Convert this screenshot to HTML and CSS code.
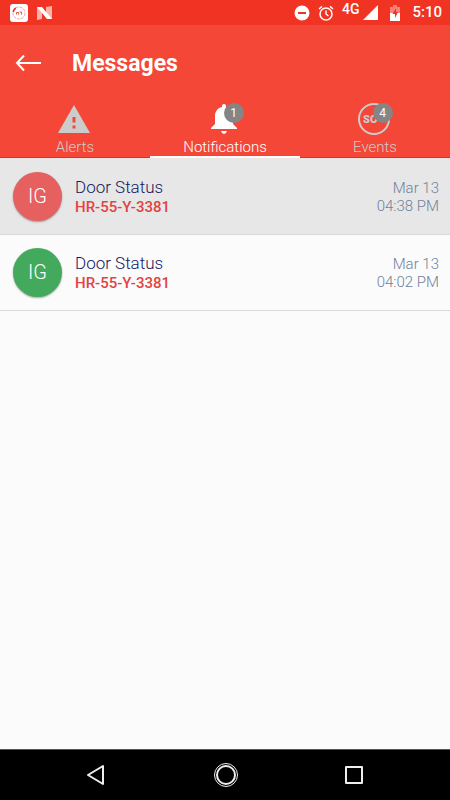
FILE: index.html
```html
<!DOCTYPE html>
<html lang="en">
<head>
<meta charset="utf-8">
<meta name="viewport" content="width=device-width, initial-scale=1">
<title>Messages</title>
<link rel="stylesheet" href="styles.css">
</head>
<body>
<div class="status-bar">
  <div class="status-left">
    <svg width="18" height="18" viewBox="0 0 18 18" aria-hidden="true"><rect width="18" height="18" rx="3" fill="#fff"/><circle cx="9" cy="9" r="6" fill="none" stroke="#f5a196" stroke-width="1" stroke-dasharray="3 1"/><path d="M3.200 8a6 6 0 0 1 2.600-4" fill="none" stroke="#e33022" stroke-width="1.500"/><path d="M6.500 10.500v-2h2v2M9.500 8h2v2.500" fill="none" stroke="#e8574a"/></svg>
    <svg width="16" height="14" viewBox="0 0 16 14" aria-hidden="true"><path d="M1 1l5 2v10l-5 1zM10 1l6-1v13l-6-2z" fill="#fab3aa"/><path d="M1 1h5l10 12h-5z" fill="#fff"/></svg>
  </div>
  <div class="status-right">
    <svg width="16" height="16" viewBox="0 0 16 16" aria-hidden="true"><circle cx="8" cy="8" r="7.500" fill="#fff"/><path d="M4 8h8" stroke="#ee3322" stroke-width="2"/></svg>
    <svg width="16" height="16" viewBox="0 0 16 16" fill="none" stroke="#fff" aria-hidden="true"><circle cx="8" cy="9" r="6" stroke-width="1.500"/><path d="M8 5.500V9l2.500 2M1 4l3-2.600M15 4l-3-2.600" stroke-width="1.400"/></svg>
    <span class="network">4G</span>
    <svg width="15" height="15" viewBox="0 0 15 15" aria-hidden="true"><path d="M0 15L15 0v15z" fill="#fff"/></svg>
    <svg class="battery" width="10" height="16" viewBox="0 0 10 16" aria-hidden="true"><path d="M0 2h3V0h4v2h3v6H0z" fill="#f78378"/><path d="M0 8h10v8H0z" fill="#fff"/><path d="M6 3L2.500 9H5v4l3-6H6z" fill="#ee3322"/></svg>
    <time>5:10</time>
  </div>
</div>
<header class="app-header">
  <div class="title-bar">
    <button class="back" type="button" aria-label="Back"><svg width="28" height="18" viewBox="0 0 28 18" fill="none" stroke="#fff" stroke-width="2" aria-hidden="true"><path d="M27 8H3M10 0.500L3 8l7 7.500"/></svg></button>
    <h1>Messages</h1>
  </div>
  <nav class="tabs">
    <a class="tab" href="#alerts">
      <span class="tab-icon alert"><svg width="32" height="28" viewBox="0 0 32 28" aria-hidden="true"><path d="M16 0l16 28H0z" fill="#ccc"/><path d="M14.500 12h3v5.500h-3zM14.500 20.500h3v3h-3z" fill="#f54738"/></svg></span>
      <span>Alerts</span>
    </a>
    <a class="tab active" href="#notifications" aria-current="page">
      <span class="tab-icon bell"><svg width="26" height="30" viewBox="0 0 26 30" aria-hidden="true"><path d="M11 3V2a2 2 0 0 1 4 0v1c5 1 7 5 7 9v8l4 4v1H0v-1l4-4v-8c0-4 2-8 7-9zM10 27h6q-1 3-3 3t-3-3z" fill="#fff"/></svg><span class="badge">1</span></span>
      <span>Notifications</span>
    </a>
    <a class="tab" href="#events">
      <span class="tab-icon ring"><svg width="32" height="32" viewBox="0 0 32 32" aria-hidden="true"><circle cx="16" cy="16" r="15" fill="none" stroke="#ccc" stroke-width="2"/><text x="5" y="20" class="ring-text">SO</text></svg><span class="badge">4</span></span>
      <span>Events</span>
    </a>
  </nav>
</header>
<main>
  <ul class="messages">
    <li class="message selected">
      <span class="avatar red">IG</span>
      <div class="details"><h2>Door Status</h2><p>HR-55-Y-3381</p></div>
      <time class="when">Mar 13<br>04:38 PM</time>
    </li>
    <li class="message">
      <span class="avatar green">IG</span>
      <div class="details"><h2>Door Status</h2><p>HR-55-Y-3381</p></div>
      <time class="when">Mar 13<br>04:02 PM</time>
    </li>
  </ul>
</main>
<footer class="system-nav">
  <button type="button" aria-label="Back"><svg width="24" height="24" viewBox="0 0 24 24" fill="none" stroke="#eee" stroke-width="2" stroke-linejoin="round" aria-hidden="true"><path d="M20 3v18L5 12z"/></svg></button>
  <button type="button" aria-label="Home"><svg width="26" height="26" viewBox="0 0 26 26" fill="none" stroke="#eee" aria-hidden="true"><circle cx="13" cy="13" r="11.500" stroke-width="1"/><circle cx="13" cy="13" r="9" stroke-width="2"/></svg></button>
  <button type="button" aria-label="Recent apps"><svg width="20" height="20" viewBox="0 0 20 20" fill="none" stroke="#eee" stroke-width="2" stroke-linejoin="round" aria-hidden="true"><path d="M2 2h16v16H2z"/></svg></button>
</footer>
</body>
</html>
```
FILE: styles.css
```css
* { box-sizing: border-box; }
body {
  margin: 0;
  min-height: 100vh;
  display: flex;
  flex-direction: column;
  background: #fbfbfb;
  font-family: Roboto, "Liberation Sans", sans-serif;
}
button { padding: 0; border: 0; background: none; display: flex; }
svg { display: block; }
h1, h2, p, ul { margin: 0; padding: 0; }

.status-bar {
  display: flex;
  justify-content: space-between;
  height: 25px;
  padding: 0 8px 0 10px;
  background: #f03322;
  color: #fff;
}
.status-left, .status-right { display: flex; align-items: center; gap: 8px; }
.network { align-self: flex-start; font-size: 14px; line-height: 18px; font-weight: 500; }
.status-right .network { margin-right: -4px; }
.battery { margin: 0 4px; }
.status-right time { font-size: 15px; line-height: 25px; font-weight: 500; }

.app-header { background: #f54738; color: #fff; border-bottom: 1px solid #efe3e1; }
.title-bar { display: flex; align-items: center; gap: 30px; height: 75px; padding: 2px 14px 0; }
h1 { font-size: 23px; line-height: 28px; font-weight: 700; }
.tabs { display: grid; grid-template-columns: repeat(3, 1fr); }
.tab {
  display: flex;
  flex-direction: column;
  align-items: center;
  gap: 1px;
  height: 58px;
  padding-top: 1px;
  border-bottom: 1px solid #f62814;
  color: #ccc;
  font-size: 15px;
  line-height: 18px;
  font-weight: 300;
  text-decoration: none;
}
.tab.active { color: #fff; border-bottom: 2px solid #fff; }
.tab-icon { position: relative; display: flex; align-items: center; height: 36px; }
.alert, .bell, .ring { margin-right: 3px; }
.ring-text { fill: #ccc; font: 900 11px Roboto, sans-serif; }
.badge {
  position: absolute;
  top: 2px;
  right: -7px;
  width: 20px;
  height: 20px;
  border-radius: 50%;
  background: #858585;
  color: #fff;
  font-size: 12px;
  line-height: 20px;
  font-weight: 400;
  text-align: center;
}
.ring .badge { right: -3px; }

main { flex: 1; }
.messages { list-style: none; }
.message {
  display: flex;
  align-items: center;
  gap: 13px;
  padding: 13px 11px 13px 13px;
  border-bottom: 1px solid #d8d8d8;
}
.selected { background: #e7e7e7; }
.avatar {
  width: 49px;
  height: 49px;
  border-radius: 50%;
  color: #fff;
  font-size: 20px;
  line-height: 49px;
  font-weight: 300;
  text-align: center;
  box-shadow: 0 1px 2px #0005;
}
.red { background: #e66060; }
.green { background: #43aa5d; }
.details { flex: 1; }
h2 { color: #17175f; font-size: 17px; line-height: 20px; font-weight: 300; }
.details p { color: #e44242; font-size: 15px; line-height: 20px; font-weight: 500; }
.when { color: #71819b; font-size: 15px; line-height: 18px; font-weight: 300; text-align: right; }

.system-nav {
  display: flex;
  align-items: center;
  justify-content: space-between;
  height: 51px;
  padding: 0 86px 0 83px;
  border-top: 1px solid #555;
  background: #000;
}
```
